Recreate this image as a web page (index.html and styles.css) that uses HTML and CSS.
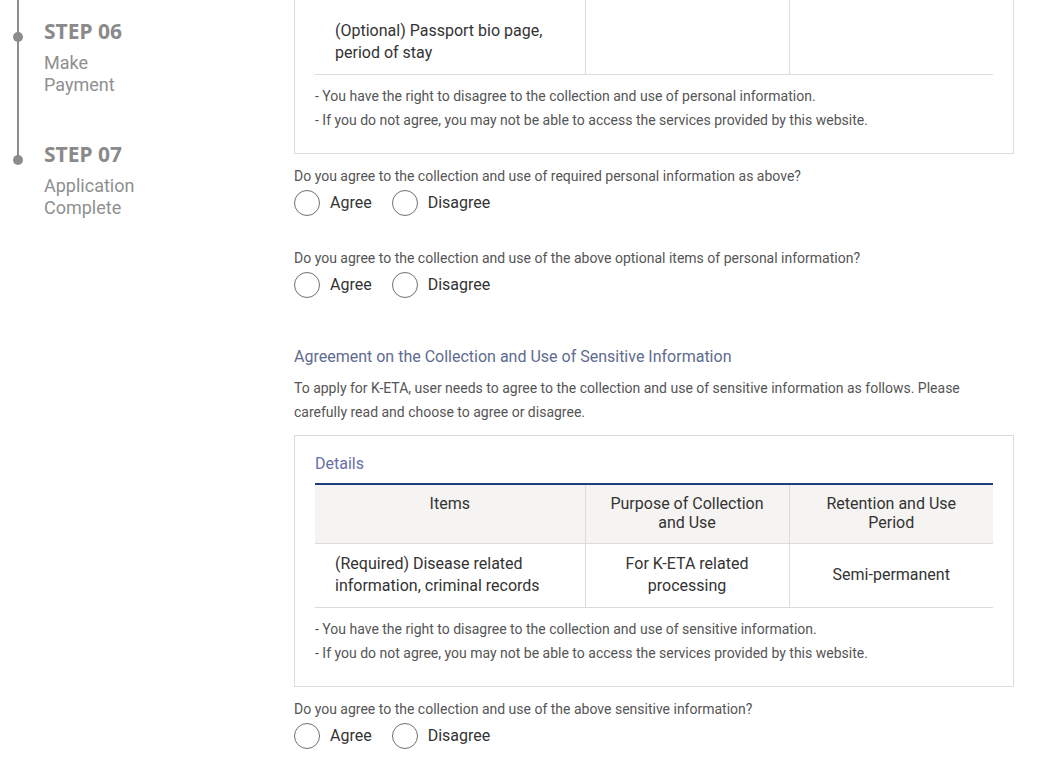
FILE: index.html
```html
<!DOCTYPE html>
<html lang="en">
<head>
<meta charset="utf-8">
<title>K-ETA Application</title>
<link rel="stylesheet" href="styles.css">
</head>
<body>
<div class="page">
  <aside class="sidebar">
    <ul class="steps">
      <li class="step">
        <div class="step-no">STEP 06</div>
        <div class="step-name">Make<br>Payment</div>
      </li>
      <li class="step">
        <div class="step-no">STEP 07</div>
        <div class="step-name">Application<br>Complete</div>
      </li>
    </ul>
  </aside>
  <main class="main">
    <div class="box box-cut">
      <table class="info-table">
        <colgroup><col class="c1"><col class="c2"><col class="c3"></colgroup>
        <tbody>
          <tr class="first-row">
            <td class="left">(Optional) Passport bio page,<br>period of stay</td>
            <td></td>
            <td></td>
          </tr>
        </tbody>
      </table>
      <ul class="notes">
        <li>- You have the right to disagree to the collection and use of personal information.</li>
        <li>- If you do not agree, you may not be able to access the services provided by this website.</li>
      </ul>
    </div>

    <div class="question first">
      <p class="q-text">Do you agree to the collection and use of required personal information as above?</p>
      <div class="radios">
        <label class="radio"><span class="circle"></span>Agree</label>
        <label class="radio"><span class="circle"></span>Disagree</label>
      </div>
    </div>

    <div class="question second">
      <p class="q-text">Do you agree to the collection and use of the above optional items of personal information?</p>
      <div class="radios">
        <label class="radio"><span class="circle"></span>Agree</label>
        <label class="radio"><span class="circle"></span>Disagree</label>
      </div>
    </div>

    <h3 class="section-title">Agreement on the Collection and Use of Sensitive Information</h3>
    <p class="section-desc">To apply for K-ETA, user needs to agree to the collection and use of sensitive information as follows. Please carefully read and choose to agree or disagree.</p>

    <div class="box">
      <h4 class="box-title">Details</h4>
      <table class="info-table headed">
        <colgroup><col class="c1"><col class="c2"><col class="c3"></colgroup>
        <thead>
          <tr>
            <th>Items</th>
            <th>Purpose of Collection<br>and Use</th>
            <th>Retention and Use<br>Period</th>
          </tr>
        </thead>
        <tbody>
          <tr>
            <td class="left">(Required) Disease related<br>information, criminal records</td>
            <td class="center">For K-ETA related<br>processing</td>
            <td class="center">Semi-permanent</td>
          </tr>
        </tbody>
      </table>
      <ul class="notes">
        <li>- You have the right to disagree to the collection and use of sensitive information.</li>
        <li>- If you do not agree, you may not be able to access the services provided by this website.</li>
      </ul>
    </div>

    <div class="question first">
      <p class="q-text">Do you agree to the collection and use of the above sensitive information?</p>
      <div class="radios">
        <label class="radio"><span class="circle"></span>Agree</label>
        <label class="radio"><span class="circle"></span>Disagree</label>
      </div>
    </div>
  </main>
</div>
</body>
</html>
```
FILE: styles.css
```css
* { box-sizing: border-box; }
html, body {
  margin: 0;
  padding: 0;
  background: #fff;
  font-family: Roboto, "Liberation Sans", sans-serif;
  color: #333;
  overflow: hidden;
}
.page {
  display: flex;
  width: 1052px;
  height: 760px;
}
.sidebar {
  width: 294px;
  flex: none;
}
.steps {
  position: relative;
  list-style: none;
  margin: 0;
  padding: 19px 0 0 44px;
}
.steps::before {
  content: "";
  position: absolute;
  left: 17px;
  top: 0;
  width: 2px;
  height: 160px;
  background: #8c8c8c;
}
.step {
  position: relative;
  height: 123px;
}
.step::before {
  content: "";
  position: absolute;
  left: -31px;
  top: 13px;
  width: 10px;
  height: 10px;
  border-radius: 50%;
  background: #8c8c8c;
}
.step-no {
  font-family: "Noto Sans", "Open Sans", sans-serif;
  font-weight: 700;
  font-size: 21px;
  line-height: 24px;
  color: #8a8a8a;
}
.step-name {
  margin-top: 9px;
  font-size: 18px;
  line-height: 22px;
  color: #8f8f8f;
}

.main {
  width: 720px;
  flex: none;
}
.box {
  border: 1px solid #dcdcdc;
  padding: 0 20px 21px;
}
.box-cut {
  border-top: none;
}
.info-table {
  width: 678px;
  border-collapse: collapse;
  table-layout: fixed;
  font-size: 16px;
  line-height: 22px;
  color: #333;
}
.info-table col.c1 { width: 270px; }
.info-table col.c2 { width: 204px; }
.info-table col.c3 { width: 204px; }
.info-table td {
  border-bottom: 1px solid #dcdcdc;
  border-left: 1px solid #dcdcdc;
  padding: 9px 20px 10px;
  vertical-align: middle;
}
.info-table td:first-child { border-left: none; }
.info-table tr.first-row td {
  padding-top: 20px;
  padding-bottom: 10px;
}
.info-table td.left { text-align: left; }
.info-table td.center { text-align: center; }
.info-table.headed thead tr {
  border-top: 2px solid #1d3d7c;
}
.info-table th {
  background: #f5f4f2;
  font-weight: 400;
  text-align: center;
  vertical-align: top;
  line-height: 19px;
  padding: 9px 10px 11px;
  border-bottom: 1px solid #dcdcdc;
  border-left: 1px solid #dcdcdc;
}
.info-table th:first-child { border-left: none; }

.notes {
  list-style: none;
  margin: 9px 0 0;
  padding: 0;
  font-size: 14px;
  line-height: 24px;
  color: #555;
}

.question {
  margin-top: 12px;
}
.question.second {
  margin-top: 32px;
}
.q-text {
  margin: 0;
  font-size: 14px;
  line-height: 20px;
  color: #555;
}
.radios {
  display: flex;
  gap: 20px;
  margin-top: 4px;
}
.radio {
  display: flex;
  align-items: center;
  gap: 10px;
  font-size: 16px;
  line-height: 26px;
  color: #333;
}
.circle {
  width: 26px;
  height: 26px;
  border: 1px solid #707070;
  border-radius: 50%;
  background: #fff;
}

.section-title {
  margin: 47px 0 0;
  font-size: 16px;
  font-weight: 400;
  line-height: 24px;
  color: #5e6b8f;
}
.section-desc {
  margin: 7px 0 11px;
  font-size: 14px;
  line-height: 24px;
  color: #555;
}
.box-title {
  margin: 0 0 7px;
  padding-top: 16px;
  font-size: 16px;
  font-weight: 400;
  line-height: 24px;
  color: #6670a6;
}
```
